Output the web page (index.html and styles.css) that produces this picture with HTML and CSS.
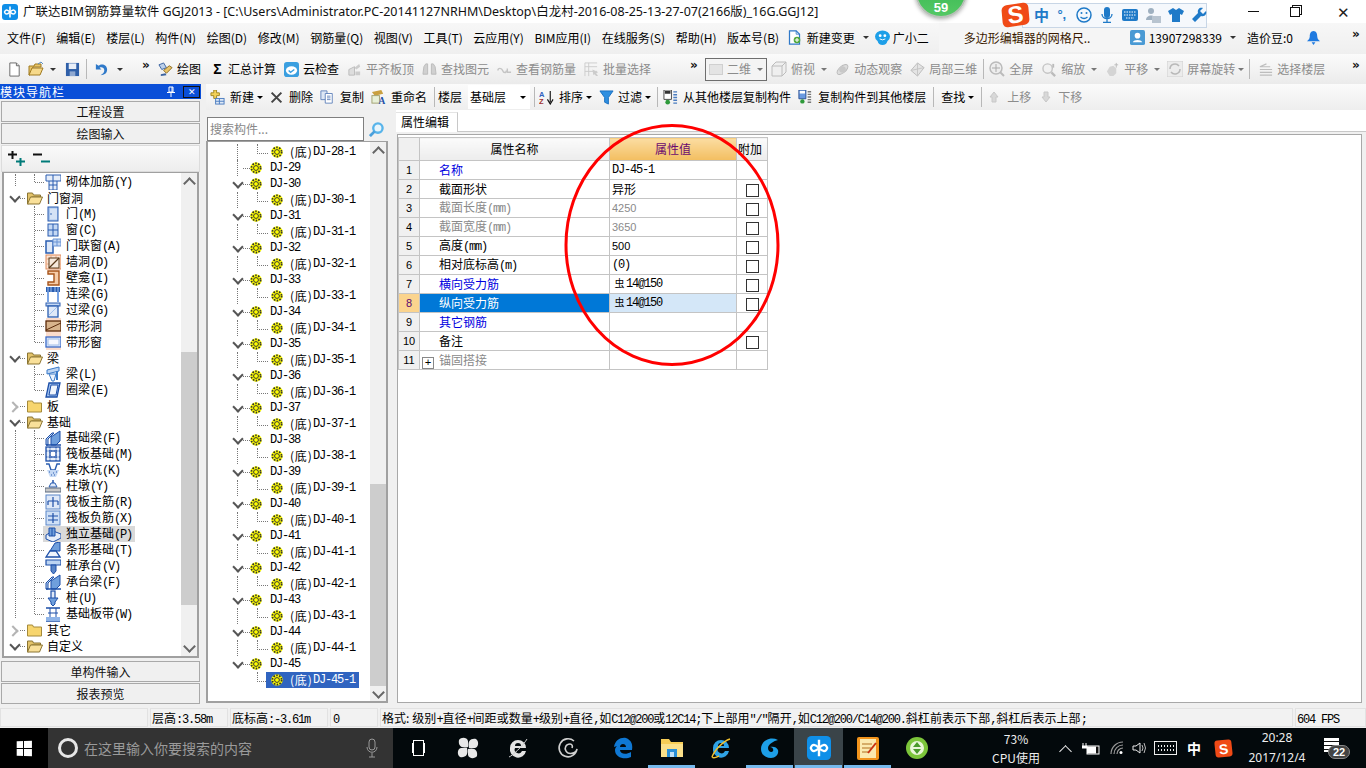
FILE: index.html
```html
<!DOCTYPE html>
<html lang="zh-CN">
<head>
<meta charset="utf-8">
<title>广联达BIM钢筋算量软件 GGJ2013</title>
<link rel="stylesheet" href="styles.css">
</head>
<body>
<svg class="defs" aria-hidden="true">
<symbol id="logo" viewBox="0 0 16 16"><rect width="16" height="16" rx="3" fill="#0f8fe8"/><path d="M8 2.500v11" stroke="#fff" stroke-width="1.600"/><path d="M2.500 8c1-3 3-2.500 5.500 0s4.500 3 5.500 0c-1-3-3-2.500-5.500 0s-4.500 3-5.500 0z" fill="#0f8fe8" stroke="#fff" stroke-width="1.500"/></symbol>
<symbol id="new" viewBox="0 0 16 16"><path d="M3 1h7l3 3v11H3z" fill="#fff" stroke="#666"/><path d="M10 1v3h3" fill="#ddd" stroke="#666"/></symbol>
<symbol id="open" viewBox="0 0 16 16"><path d="M1 5h5l1-2h6v3H5L2 14H1z" fill="#e8c66a" stroke="#a07a20"/><path d="M4 7h11l-3 7H1z" fill="#f6d98a" stroke="#a07a20"/><path d="M10 3l3-2 2 2" fill="none" stroke="#5a8fc0"/></symbol>
<symbol id="save" viewBox="0 0 16 16"><rect x="1" y="1" width="14" height="14" fill="#2f5fa8"/><rect x="4" y="1.500" width="8" height="6" fill="#e8eef8"/><rect x="5" y="10" width="6" height="5" fill="#8fa8d0"/></symbol>
<symbol id="undo" viewBox="0 0 16 16"><path d="M2 2v6h6L6 6c2-1 5 0 5 3 0 2-2 4-4 5 4 0 7-2 7-6 0-5-6-7-9-4z" fill="#2f79c9"/></symbol>
<symbol id="brush" viewBox="0 0 16 16"><path d="M1 3l5-2 3 5-5 2z" fill="#bcd0ea" stroke="#3a62a0"/><path d="M6 9l6-5 3 2-6 6z" fill="#e9c56a" stroke="#8a6a20"/><path d="M3 13l5-1 1 2-6 1z" fill="#3a62a0"/></symbol>
<symbol id="cloud" viewBox="0 0 16 16"><rect width="16" height="16" rx="3" fill="#3a9fe0"/><ellipse cx="8" cy="9" rx="6" ry="4.500" fill="#fff"/><path d="M5 9l2 2 4-3" fill="none" stroke="#3a9fe0" stroke-width="1.500"/></symbol>
<symbol id="grayblock" viewBox="0 0 16 16"><path d="M2 14V8l6-3v9z" fill="#ddd" stroke="#bbb"/><path d="M8 6l5-4 1 3-4 3zM9 10h5v4H9z" fill="#ccc"/></symbol>
<symbol id="binoc" viewBox="0 0 16 16"><path d="M2 5l2-3h2v11H1zM14 5l-2-3h-2v11h5z" fill="#d0d0d0" stroke="#bbb"/></symbol>
<symbol id="rebars" viewBox="0 0 16 16"><path d="M1 9c0-3 4-3 5 0s4 3 4 0" fill="none" stroke="#c4c4c4" stroke-width="1.500"/><path d="M11 7v4h4" fill="none" stroke="#c4c4c4" stroke-width="1.500"/></symbol>
<symbol id="batch" viewBox="0 0 16 16"><path d="M1 1h13M1 1v14M5 1v14M1 5h13M1 10h13" stroke="#ccc" fill="none"/><path d="M9 8l6 3-2 1 2 3-2 0-2-2-1 1z" fill="#ccc"/></symbol>
<symbol id="cube" viewBox="0 0 16 16"><path d="M1 5l4-4h10v10l-4 4H1z" fill="#efefef" stroke="#bcbcbc"/><path d="M1 5h10v10M11 5l4-4" fill="none" stroke="#bcbcbc"/></symbol>
<symbol id="orbit" viewBox="0 0 16 16"><ellipse cx="8" cy="8" rx="7" ry="3.500" transform="rotate(-40 8 8)" fill="#ddd" stroke="#bbb"/><circle cx="8" cy="8" r="3.500" fill="#c8c8c8"/></symbol>
<symbol id="local3d" viewBox="0 0 16 16"><path d="M8 1l7 5-7 9-7-6z" fill="#e4e4e4" stroke="#bbb"/><path d="M8 1v14M1 9l14-3" stroke="#c4c4c4"/></symbol>
<symbol id="zoomfull" viewBox="0 0 16 16"><circle cx="7" cy="7" r="6" fill="#eee" stroke="#bbb" stroke-width="1.500"/><path d="M7 3v8M3 7h8" stroke="#aaa"/><path d="M11 11l4 4" stroke="#bbb" stroke-width="2"/></symbol>
<symbol id="zoomin" viewBox="0 0 16 16"><circle cx="6" cy="7" r="5" fill="#f2f2f2" stroke="#c4c4c4" stroke-width="1.500"/><path d="M10 11l4 4" stroke="#bbb" stroke-width="2.500"/><path d="M12 2v4" stroke="#bbb" stroke-width="2"/></symbol>
<symbol id="hand" viewBox="0 0 16 16"><path d="M2 10l3-5 4-1 3 3v5l-3 3H5z" fill="#d4d4d4"/><path d="M12 1v5M10 3h4" stroke="#bbb"/></symbol>
<symbol id="rotate" viewBox="0 0 16 16"><rect width="16" height="16" fill="#ececec" stroke="#d0d0d0"/><path d="M3 8a5 5 0 0 1 9-3M13 8a5 5 0 0 1-9 3" fill="none" stroke="#b8b8b8" stroke-width="1.500"/></symbol>
<symbol id="floors" viewBox="0 0 16 16"><path d="M2 5h11M2 8h13M2 11h13M2 14h13M9 2L2 5" stroke="#bdbdbd" fill="none" stroke-width="1.200"/></symbol>
<symbol id="addcomp" viewBox="0 0 16 16"><path d="M4 0v3H1v3h3v3h3V6h3V3H7V0z" fill="#f4d258" stroke="#a08620"/><rect x="6" y="9" width="9" height="6" fill="#dfe9f6" stroke="#4a7cc0"/><path d="M6 12h9M10 9v6" stroke="#4a7cc0"/></symbol>
<symbol id="del" viewBox="0 0 16 16"><path d="M2 2l12 12M14 2L2 14" stroke="#444" stroke-width="2.500"/></symbol>
<symbol id="copy" viewBox="0 0 16 16"><path d="M1 1h7v10H1z" fill="#dde7f5" stroke="#5a7eb8"/><path d="M6 4h8v11H6z" fill="#fff" stroke="#5a7eb8"/><path d="M8 7h4M8 9h4M8 11h4" stroke="#5a7eb8"/></symbol>
<symbol id="rename" viewBox="0 0 16 16"><path d="M1 2l10-2 2 4-9 2z" fill="#c9a040"/><rect x="1" y="6" width="8" height="8" fill="#e8f0d8" stroke="#a0a070"/><text x="8" y="15" class="ictext">A</text></symbol>
<symbol id="sort" viewBox="0 0 16 16"><text x="0" y="7" class="ictext2">A</text><text x="0" y="15" class="ictext3">Z</text><path d="M12 1v12M9 10l3 5 3-5" fill="none" stroke="#111" stroke-width="1.200"/></symbol>
<symbol id="funnel" viewBox="0 0 16 16"><path d="M1 1h14L10 8v7l-4-2V8z" fill="#2f8fe0" stroke="#1a6fc0"/></symbol>
<symbol id="copyfrom" viewBox="0 0 16 16"><path d="M1 0h8v10H1z" fill="#fff" stroke="#444"/><rect x="2" y="1" width="6" height="3" fill="#333"/><circle cx="5" cy="13" r="2.500" fill="#2e9a3a"/><path d="M11 2h4M11 5h4M11 8h4M11 11h4M11 14h4" stroke="#4a7cc0" stroke-width="1.500"/></symbol>
<symbol id="copyto" viewBox="0 0 16 16"><path d="M1 0h8v10H1z" fill="#6a9ae0" stroke="#234a90"/><rect x="2" y="1" width="6" height="3" fill="#fff"/><circle cx="5" cy="13" r="2.500" fill="#2e9a3a"/><path d="M11 2h4M11 5h4M11 8h4M11 11h4M11 14h4" stroke="#777" stroke-width="1.500"/></symbol>
<symbol id="up" viewBox="0 0 10 12"><path d="M5 1l4 5H7v5H3V6H1z" fill="#d8d8d8" stroke="#c8c8c8"/></symbol>
<symbol id="down" viewBox="0 0 10 12"><path d="M5 11L1 6h2V1h4v5h2z" fill="#d8d8d8" stroke="#c8c8c8"/></symbol>
<symbol id="change" viewBox="0 0 16 18"><path d="M2 1h8l4 4v12H2z" fill="#fff" stroke="#2f79c9" stroke-width="1.500"/><path d="M10 1v4h4" fill="none" stroke="#2f79c9"/><circle cx="11" cy="12" r="4" fill="#52a93c"/><path d="M11 9.500v5M8.500 12h5" stroke="#fff" stroke-width="1.300"/></symbol>
<symbol id="robot" viewBox="0 0 16 16"><ellipse cx="8" cy="7" rx="8" ry="6.500" fill="#1d9fe8"/><ellipse cx="8" cy="12" rx="5" ry="4" fill="#1d9fe8"/><circle cx="5.500" cy="6" r="1.500" fill="#fff"/><circle cx="10.500" cy="6" r="1.500" fill="#fff"/><path d="M5 9.500q3 2 6 0" stroke="#fff" fill="none"/></symbol>
<symbol id="userblue" viewBox="0 0 16 16"><rect width="16" height="16" rx="2" fill="#4a9ad4"/><circle cx="8" cy="6" r="3" fill="#fff"/><path d="M3 13c1-3 9-3 10 0z" fill="#fff"/></symbol>
<symbol id="bell" viewBox="0 0 16 16"><path d="M8 1c3 0 4 3 4 6 0 3 2 4 3 5H1c1-1 3-2 3-5 0-3 1-6 4-6z" fill="#1f7ae0"/><path d="M6 13h4l-2 3z" fill="#1f7ae0"/></symbol>
<symbol id="gear" viewBox="0 0 12 12"><circle cx="6" cy="6" r="5.800" fill="#ff0"/><circle cx="6" cy="6" r="4.600" fill="none" stroke="#333" stroke-width="1.800" stroke-dasharray="1.600 1.300"/><circle cx="6" cy="6" r="2.400" fill="#ff0" stroke="#333"/></symbol>
<symbol id="lens" viewBox="0 0 16 16"><circle cx="9.500" cy="6.500" r="5" fill="#e8f5fc" stroke="#58b4ea" stroke-width="2.500"/><path d="M6 10l-5 5" stroke="#4aa0dc" stroke-width="3"/></symbol>
<symbol id="pin" viewBox="0 0 10 12"><path d="M3 1h4v5H3z" fill="none" stroke="#fff"/><path d="M1 6.500h8M5 7v4" stroke="#fff"/><path d="M6 1v5" stroke="#fff"/></symbol>
<symbol id="expandall" viewBox="0 0 18 16"><path d="M0 3.500h9M4.500 0v8" stroke="#111" stroke-width="2"/><path d="M8 10.500h9M12.500 7v8" stroke="#007a78" stroke-width="2"/></symbol>
<symbol id="collapseall" viewBox="0 0 18 16"><path d="M0 3.500h9" stroke="#111" stroke-width="2"/><path d="M8 10.500h9" stroke="#007a78" stroke-width="2"/></symbol>
<symbol id="folder" viewBox="0 0 16 14"><path d="M1 2h5l1 2h8v9H1z" fill="#f7d56e" stroke="#a58a3a"/></symbol>
<symbol id="folderopen" viewBox="0 0 16 14"><path d="M1 2h5l1 2h7v2H5l-3 7H1z" fill="#e3c36a" stroke="#8a7432"/><path d="M4 6h12l-3 7H1z" fill="#f9e09a" stroke="#8a7432"/></symbol>
<symbol id="n-masonry" viewBox="0 0 16 16"><path d="M1 1h15v6h-4v9H4V7H1z" fill="#e5edf9" stroke="#2a5db0"/><path d="M4 7h8M8 1v15M4 11h8" stroke="#2a5db0"/></symbol>
<symbol id="n-door" viewBox="0 0 16 16"><rect x="3" y="1" width="10" height="14" fill="#a8c4ec" stroke="#2a5db0"/><rect x="5" y="2.500" width="7" height="11" fill="#d4e2f6"/><circle cx="6" cy="8" r=".8" fill="#2a5db0"/></symbol>
<symbol id="n-window" viewBox="0 0 16 16"><rect x="3" y="2" width="10" height="12" fill="#c4d8f4" stroke="#2a5db0"/><path d="M8 2v12M3 8h10" stroke="#2a5db0"/></symbol>
<symbol id="n-doorwin" viewBox="0 0 16 16"><rect x="1" y="3" width="7" height="12" fill="#dfe9f8" stroke="#2a5db0" stroke-width="1.500"/><path d="M8 1h8v7H8z" fill="#c4d8f4" stroke="#6a94d4"/><path d="M12 1v7M8 4h8" stroke="#6a94d4"/></symbol>
<symbol id="n-hole" viewBox="0 0 16 16"><rect x="1" y="1" width="15" height="14" fill="#fbe4d4" stroke="#e08a5a"/><path d="M1 5h15M6 1v14M11 1v14M1 10h15" stroke="#ecae88"/><rect x="4" y="4" width="10" height="10" fill="#f6e9dc" stroke="#5a3a1a"/><path d="M4 14L14 4" stroke="#5a3a1a" stroke-width="1.300"/></symbol>
<symbol id="n-niche" viewBox="0 0 16 16"><path d="M3 1h11v14H3v-3h6V4H3z" fill="#f6cca8" stroke="#a8541a" stroke-width="1.400"/></symbol>
<symbol id="n-lintel" viewBox="0 0 16 16"><rect x="1" y="1" width="14" height="5" fill="#2a5db0"/><path d="M3 1v5M6 1v5M10 1v5M13 1v5" stroke="#9fc0ee"/><path d="M3 6v10M13 6v10" stroke="#7aa4e4" stroke-width="2"/></symbol>
<symbol id="n-over" viewBox="0 0 16 16"><rect x="1" y="1" width="14" height="3" fill="#c4d8f4" stroke="#2a5db0"/><rect x="3" y="4" width="10" height="11" fill="#dfe9f8" stroke="#2a5db0" stroke-width="1.300"/><path d="M4 13L12 5" stroke="#9fc0ee"/></symbol>
<symbol id="n-bandh" viewBox="0 0 16 16"><rect x="1" y="0" width="15" height="16" fill="#fbdccc"/><rect x="1" y="3" width="15" height="10" fill="#d9b48c" stroke="#5a2a0a" stroke-width="1.300"/><path d="M1 12L16 5" stroke="#5a2a0a"/></symbol>
<symbol id="n-bandw" viewBox="0 0 16 16"><rect x="1" y="0" width="15" height="16" fill="#fbdccc"/><rect x="1" y="3" width="15" height="10" fill="#e5ecfa" stroke="#3a6ac8" stroke-width="1.300"/><rect x="3" y="5" width="11" height="6" fill="#f6f8fe" stroke="#a0bce8"/></symbol>
<symbol id="n-beam" viewBox="0 0 16 16"><path d="M2 4l12-3v4l-12 3z" fill="#bcd4f2" stroke="#3a7ac8"/><path d="M4 8h7l-2 7H7z" fill="#eaf2fc" stroke="#3a7ac8"/><path d="M12 5v9" stroke="#3a7ac8" stroke-width="2"/></symbol>
<symbol id="n-ring" viewBox="0 0 16 16"><path d="M4 1h11l-3 14H1z" fill="#9fc0ee" stroke="#1d4fa8" stroke-width="1.300"/><path d="M6 3h7l-2 10H4z" fill="#f0f5fd" stroke="#1d4fa8"/></symbol>
<symbol id="n-fb" viewBox="0 0 16 16"><path d="M1 15V9l6-6h2L3 9v6z" fill="#bcd4f2" stroke="#1d4fa8"/><path d="M6 15V7l9-6v10l-4 4z" fill="#6f9fdc" stroke="#1d4fa8"/><path d="M1 15h15" stroke="#1d4fa8" stroke-width="1.500"/></symbol>
<symbol id="n-raft" viewBox="0 0 16 16"><rect x="1" y="1" width="14" height="14" fill="#e5edf9" stroke="#1d4fa8" stroke-width="1.300"/><rect x="5" y="5" width="6" height="6" fill="#fff" stroke="#1d4fa8"/><path d="M1 5h14M1 11h14M5 1v14M11 1v14" stroke="#1d4fa8" stroke-dasharray="1.500 1"/></symbol>
<symbol id="n-pit" viewBox="0 0 16 16"><path d="M1 2h3l2 6h4l2-6h3" fill="none" stroke="#2a5db0" stroke-width="1.400"/><path d="M2 8h12l-3 7H5z" fill="#c4d8f4"/><path d="M4 10h1M8 11h1M11 10h1M6 13h1M9 13h1" stroke="#2a5db0"/></symbol>
<symbol id="n-pier" viewBox="0 0 16 16"><path d="M7 2h2v3H7z" fill="#5a80c0"/><path d="M4 9l2-4h4l2 4z" fill="#dfe9f8" stroke="#2a5db0"/><rect x="0" y="10" width="16" height="4" fill="#c8c8c8" stroke="#5a6a80"/></symbol>
<symbol id="n-mainbar" viewBox="0 0 16 16"><rect x="1" y="1" width="14" height="14" fill="#dfe9f8" stroke="#5a86c8"/><path d="M8 3v10M3 7h10M3 7v4M13 7v4" fill="none" stroke="#1d4fa8" stroke-width="1.200"/></symbol>
<symbol id="n-negbar" viewBox="0 0 16 16"><rect x="1" y="1" width="14" height="14" fill="#cfe0f6" stroke="#5a86c8"/><path d="M8 3v10M3 6h10M3 10h10" fill="none" stroke="#1d4fa8" stroke-width="1.200"/></symbol>
<symbol id="n-ind" viewBox="0 0 16 16"><path d="M1 9l7-4 8 3v4l-8 4-7-3z" fill="#e5edf9" stroke="#1d4fa8"/><path d="M4 2h6v8H4z" fill="#6f9fdc" stroke="#1d4fa8"/><path d="M7 2v8" stroke="#1d4fa8"/></symbol>
<symbol id="n-strip" viewBox="0 0 16 16"><path d="M5 9l5-8 5-1v9z" fill="#6f9fdc" stroke="#1d4fa8"/><path d="M1 15l4-6h6l4 6z" fill="#f0f5fd" stroke="#1d4fa8" stroke-width="1.300"/></symbol>
<symbol id="n-cap" viewBox="0 0 16 16"><path d="M1 2h15v5H1z" fill="#bcd4f2" stroke="#1d4fa8" stroke-width="1.200"/><path d="M6 7h5v6l-2.500 3L6 13z" fill="#5a86c8" stroke="#1d4fa8"/></symbol>
<symbol id="n-pile" viewBox="0 0 16 16"><rect x="6" y="1" width="4" height="8" fill="#dfe9f8" stroke="#1d4fa8" stroke-width="1.200"/><path d="M3 8h10l-3 4v2l-2 2-2-2v-2z" fill="#6f9fdc" stroke="#1d4fa8"/></symbol>
<symbol id="n-band" viewBox="0 0 16 16"><path d="M1 2h14M1 15h14" stroke="#1d4fa8" stroke-width="1.500"/><rect x="1" y="11" width="14" height="4" fill="#8fb4e8"/><path d="M5 2v9M11 2v9M3 7h10" stroke="#1d4fa8"/></symbol>
<symbol id="w-fan" viewBox="0 0 24 24"><path d="M12 11C5 13 2 9 3 4c2-3 8-3 9 1zM13 12c-2-7 2-10 7-9 3 2 3 8-1 9zM12 13c7-2 10 2 9 7-2 3-8 3-9-1zM11 12c2 7-2 10-7 9-3-2-3-8 1-9z" fill="#e8e8e8"/></symbol>
<symbol id="w-iewhite" viewBox="0 0 24 24"><path d="M4 12a8 8 0 0 1 16 0H9a3.500 3.500 0 0 0 7 3h4a8 8 0 0 1-16-3zm5-2h6a3 3 0 0 0-6 0z" fill="#e4e4e4" fill-rule="evenodd"/><path d="M3 21c3-1 14-11 18-18" stroke="#ccc" fill="none"/></symbol>
<symbol id="w-swirl" viewBox="0 0 24 24"><path d="M18 5a9 9 0 1 0 3 8c-1 5-9 6-11 2-2-3 0-7 4-7 2 0 3 2 2 4" fill="none" stroke="#d0d0d0" stroke-width="1.600"/></symbol>
<symbol id="w-edge" viewBox="0 0 24 24"><path d="M3 11C4 4 10 1 15 2c5 2 7 6 6 12H9c0 4 6 5 11 2v5c-6 3-16 1-16-7 0-2 1-3 2-4-1 0-2 1-3 1zm6 0h6c0-4-6-4-6 0z" fill="#0f78d4" fill-rule="evenodd"/></symbol>
<symbol id="w-folder" viewBox="0 0 24 24"><path d="M1 3h8l2 3h12v15H1z" fill="#f7cd56"/><rect x="1" y="8" width="22" height="13" fill="#fbe08a"/><rect x="7" y="13" width="10" height="8" fill="#2a8fd8"/><rect x="10" y="16" width="4" height="5" fill="#bfe0f8"/></symbol>
<symbol id="w-ie" viewBox="0 0 24 24"><path d="M4 12a8 8 0 0 1 16 0H9a3.500 3.500 0 0 0 7 3h4a8 8 0 0 1-16-3zm5-2h6a3 3 0 0 0-6 0z" fill="#2fa3e6" fill-rule="evenodd"/><path d="M3 21C5 15 14 5 21 3M3 21c2 2 5 0 7-1" stroke="#f2c230" fill="none" stroke-width="1.500"/></symbol>
<symbol id="w-g" viewBox="0 0 24 24"><path d="M20 4C12 0 3 5 3 13c0 6 5 9 10 9 5 0 8-4 7-8-1-3-5-4-8-3 2 0 4 2 3 4-1 2-5 1-5-3 0-4 6-7 10-8z" fill="#1d9fe8"/></symbol>
<symbol id="w-note" viewBox="0 0 24 24"><rect x="1" y="1" width="22" height="23" rx="2" fill="#f2941c"/><rect x="4" y="3" width="16" height="19" fill="#fbeab0"/><path d="M6 8h10M6 12h9M6 16h6" stroke="#b07020"/><path d="M20 7l-8 10" stroke="#c83010" stroke-width="2"/></symbol>
<symbol id="w-green" viewBox="0 0 24 24"><circle cx="12" cy="12" r="11" fill="#7cc53a"/><circle cx="12" cy="12" r="7" fill="#eaf6d8"/><path d="M12 6l4 5H8zM12 18l4-5H8z" fill="#4a9a2a"/></symbol>
<symbol id="w-usb" viewBox="0 0 18 14"><path d="M1 2v3M4 2v3M0 5h5v2H0z" stroke="#fff" fill="#fff"/><rect x="5" y="5" width="12" height="8" fill="#111" stroke="#fff"/><rect x="5" y="5.500" width="9" height="7" fill="#fff"/></symbol>
<symbol id="w-wifi" viewBox="0 0 14 14"><path d="M1 13a12 12 0 0 1 12-12M4 13a9 9 0 0 1 9-9M7 13a6 6 0 0 1 6-6" fill="none" stroke="#999" stroke-width="1.200"/><circle cx="11" cy="11.500" r="1.500" fill="#fff"/></symbol>
<symbol id="w-vol" viewBox="0 0 16 14"><path d="M1 5h3l4-3v10L4 9H1z" fill="none" stroke="#eee"/><path d="M10 4q2 3 0 6M12 2q3 5 0 10" fill="none" stroke="#bbb"/></symbol>
</svg>

<header class="titlebar">
  <svg class="title-logo"><use href="#logo"/></svg>
  <span class="title-text">广联达BIM钢筋算量软件 GGJ2013 - [C:\Users\Administrator.PC-20141127NRHM\Desktop\白龙村-2016-08-25-13-27-07(2166版)_16G.GGJ12]</span>
  <div class="winctl">
    <i class="win-min"></i>
    <i class="win-res"></i>
    <i class="win-close">✕</i>
  </div>
</header>

<nav class="menubar">
  <span>文件(F)</span><span>编辑(E)</span><span>楼层(L)</span><span>构件(N)</span><span>绘图(D)</span><span>修改(M)</span><span>钢筋量(Q)</span><span>视图(V)</span><span>工具(T)</span><span>云应用(Y)</span><span>BIM应用(I)</span><span>在线服务(S)</span><span>帮助(H)</span><span>版本号(B)</span>
  <svg class="ic m-change"><use href="#change"/></svg><span class="m-tight">新建变更</span><i class="dd m-dd"></i>
  <svg class="ic m-robot"><use href="#robot"/></svg><span class="m-tight">广小二</span>
  <div class="m-notice">多边形编辑器的网格尺..</div>
  <svg class="ic m-user"><use href="#userblue"/></svg><span class="m-tight">13907298339</span><i class="dd m-dd"></i>
  <span class="m-bean">造价豆:0</span>
  <svg class="ic m-bell"><use href="#bell"/></svg>
  <b class="more more-end">»</b>
</nav>

<div class="toolbar">
  <svg class="ic g7"><use href="#new"/></svg>
  <svg class="ic16 g6"><use href="#open"/></svg><i class="dd g6"></i>
  <svg class="ic g9"><use href="#save"/></svg><i class="sep g6"></i>
  <svg class="ic g7"><use href="#undo"/></svg><i class="dd g8"></i>
  <b class="more g20">»</b>
  <div class="tool g7"><svg class="ic"><use href="#brush"/></svg><span>绘图</span></div>
  <div class="tool g10"><span class="sigma">Σ</span><span>汇总计算</span></div>
  <div class="tool g8"><svg class="ic"><use href="#cloud"/></svg><span>云检查</span></div>
  <div class="tool off g8"><svg class="ic"><use href="#grayblock"/></svg><span>平齐板顶</span></div>
  <div class="tool off g8"><svg class="ic"><use href="#binoc"/></svg><span>查找图元</span></div>
  <div class="tool off g8"><svg class="ic"><use href="#rebars"/></svg><span>查看钢筋量</span></div>
  <div class="tool off g8"><svg class="ic"><use href="#batch"/></svg><span>批量选择</span></div>
  <b class="more g39">»</b>
  <div class="combo combo2d g6"><i class="combo-swatch"></i><span>二维</span><i class="dd dd-grey"></i></div>
  <div class="tool off g4"><svg class="ic16"><use href="#cube"/></svg><span>俯视</span></div><i class="dd dd-grey g6"></i>
  <div class="tool off g8"><svg class="ic"><use href="#orbit"/></svg><span>动态观察</span></div>
  <div class="tool off g8"><svg class="ic"><use href="#local3d"/></svg><span>局部三维</span></div>
  <i class="sep g6"></i>
  <div class="tool off g5"><svg class="ic16"><use href="#zoomfull"/></svg><span>全屏</span></div>
  <div class="tool off g9"><svg class="ic"><use href="#zoomin"/></svg><span>缩放</span></div><i class="dd dd-grey g6"></i>
  <div class="tool off g8"><svg class="ic"><use href="#hand"/></svg><span>平移</span></div><i class="dd dd-grey g6"></i>
  <div class="tool off g7"><svg class="ic16"><use href="#rotate"/></svg><span>屏幕旋转</span></div><i class="dd dd-grey g3"></i>
  <i class="sep g5"></i>
  <div class="tool off g8"><svg class="ic"><use href="#floors"/></svg><span>选择楼层</span></div>
  <b class="more more-end">»</b>
</div>

<main class="workspace">
  <aside class="nav">
    <div class="nav-head"><span>模块导航栏</span><svg class="pin"><use href="#pin"/></svg><i class="nav-x">✕</i></div>
    <button class="nav-btn">工程设置</button>
    <button class="nav-btn">绘图输入</button>
    <div class="nav-tools"><svg class="pm"><use href="#expandall"/></svg><svg class="pm"><use href="#collapseall"/></svg></div>
    <div class="treebox nav-tree">
      <div class="tree-list">
        <div class="grp trunk"><div class="nc"><div class="ni"><svg class="nic"><use href="#n-masonry"/></svg><span>砌体加筋<span class="m">(Y)</span></span></div></div></div>
        <div class="nf"><i class="chev"></i><svg class="fol"><use href="#folderopen"/></svg><span>门窗洞</span></div>
        <div class="grp">
          <div class="nc"><div class="ni"><svg class="nic"><use href="#n-door"/></svg><span>门<span class="m">(M)</span></span></div></div>
          <div class="nc"><div class="ni"><svg class="nic"><use href="#n-window"/></svg><span>窗<span class="m">(C)</span></span></div></div>
          <div class="nc"><div class="ni"><svg class="nic"><use href="#n-doorwin"/></svg><span>门联窗<span class="m">(A)</span></span></div></div>
          <div class="nc"><div class="ni"><svg class="nic"><use href="#n-hole"/></svg><span>墙洞<span class="m">(D)</span></span></div></div>
          <div class="nc"><div class="ni"><svg class="nic"><use href="#n-niche"/></svg><span>壁龛<span class="m">(I)</span></span></div></div>
          <div class="nc"><div class="ni"><svg class="nic"><use href="#n-lintel"/></svg><span>连梁<span class="m">(G)</span></span></div></div>
          <div class="nc"><div class="ni"><svg class="nic"><use href="#n-over"/></svg><span>过梁<span class="m">(G)</span></span></div></div>
          <div class="nc"><div class="ni"><svg class="nic"><use href="#n-bandh"/></svg><span>带形洞</span></div></div>
          <div class="nc"><div class="ni"><svg class="nic"><use href="#n-bandw"/></svg><span>带形窗</span></div></div>
        </div>
        <div class="nf"><i class="chev"></i><svg class="fol"><use href="#folderopen"/></svg><span>梁</span></div>
        <div class="grp">
          <div class="nc"><div class="ni"><svg class="nic"><use href="#n-beam"/></svg><span>梁<span class="m">(L)</span></span></div></div>
          <div class="nc"><div class="ni"><svg class="nic"><use href="#n-ring"/></svg><span>圈梁<span class="m">(E)</span></span></div></div>
        </div>
        <div class="nf"><i class="chev closed"></i><svg class="fol"><use href="#folder"/></svg><span>板</span></div>
        <div class="nf"><i class="chev"></i><svg class="fol"><use href="#folderopen"/></svg><span>基础</span></div>
        <div class="grp trunk">
          <div class="nc"><div class="ni"><svg class="nic"><use href="#n-fb"/></svg><span>基础梁<span class="m">(F)</span></span></div></div>
          <div class="nc"><div class="ni"><svg class="nic"><use href="#n-raft"/></svg><span>筏板基础<span class="m">(M)</span></span></div></div>
          <div class="nc"><div class="ni"><svg class="nic"><use href="#n-pit"/></svg><span>集水坑<span class="m">(K)</span></span></div></div>
          <div class="nc"><div class="ni"><svg class="nic"><use href="#n-pier"/></svg><span>柱墩<span class="m">(Y)</span></span></div></div>
          <div class="nc"><div class="ni"><svg class="nic"><use href="#n-mainbar"/></svg><span>筏板主筋<span class="m">(R)</span></span></div></div>
          <div class="nc"><div class="ni"><svg class="nic"><use href="#n-negbar"/></svg><span>筏板负筋<span class="m">(X)</span></span></div></div>
          <div class="nc"><div class="ni ni-sel"><svg class="nic"><use href="#n-ind"/></svg><span>独立基础<span class="m">(P)</span></span></div></div>
          <div class="nc"><div class="ni"><svg class="nic"><use href="#n-strip"/></svg><span>条形基础<span class="m">(T)</span></span></div></div>
          <div class="nc"><div class="ni"><svg class="nic"><use href="#n-cap"/></svg><span>桩承台<span class="m">(V)</span></span></div></div>
          <div class="nc"><div class="ni"><svg class="nic"><use href="#n-fb"/></svg><span>承台梁<span class="m">(F)</span></span></div></div>
          <div class="nc"><div class="ni"><svg class="nic"><use href="#n-pile"/></svg><span>桩<span class="m">(U)</span></span></div></div>
          <div class="nc"><div class="ni"><svg class="nic"><use href="#n-band"/></svg><span>基础板带<span class="m">(W)</span></span></div></div>
        </div>
        <div class="nf"><i class="chev closed"></i><svg class="fol"><use href="#folder"/></svg><span>其它</span></div>
        <div class="nf"><i class="chev"></i><svg class="fol"><use href="#folderopen"/></svg><span>自定义</span></div>
      </div>
      <div class="sb"><i class="sb-up"></i><div class="sb-track"><div class="thumb thumb-nav"></div></div><i class="sb-dn"></i></div>
    </div>
    <button class="nav-btn nav-btn-low">单构件输入</button>
    <button class="nav-btn">报表预览</button>
  </aside>

  <div class="editor">
    <div class="toolbar2">
      <div class="tool t5"><svg class="ic"><use href="#addcomp"/></svg><span>新建</span></div><i class="dd dd-k g3"></i>
      <div class="tool t6 g7"><svg class="ic13"><use href="#del"/></svg><span>删除</span></div>
      <div class="tool t6 g7"><svg class="ic14"><use href="#copy"/></svg><span>复制</span></div>
      <div class="tool t5 g7"><svg class="ic"><use href="#rename"/></svg><span>重命名</span></div>
      <i class="sep g7"></i>
      <span class="g3">楼层</span>
      <div class="combo-floor g6"><span>基础层</span><i class="dd dd-k"></i></div>
      <i class="sep g4"></i>
      <div class="tool t5 g4"><svg class="ic"><use href="#sort"/></svg><span>排序</span></div><i class="dd dd-k g3"></i>
      <div class="tool g7"><svg class="ic"><use href="#funnel"/></svg><span>过滤</span></div><i class="dd dd-k g3"></i>
      <i class="sep g6"></i>
      <div class="tool t5 g5"><svg class="ic"><use href="#copyfrom"/></svg><span>从其他楼层复制构件</span></div>
      <div class="tool t6 g7"><svg class="ic14"><use href="#copyto"/></svg><span>复制构件到其他楼层</span></div>
      <i class="sep g7"></i>
      <span class="g7">查找</span><i class="dd dd-k g3"></i>
      <i class="sep g7"></i>
      <div class="tool off t8 g7"><svg class="ic10"><use href="#up"/></svg><span>上移</span></div>
      <div class="tool off t7 g10"><svg class="ic10"><use href="#down"/></svg><span>下移</span></div>
    </div>
    <div class="panes">
      <section class="comp">
        <div class="search"><div class="search-input">搜索构件...</div><svg class="search-btn"><use href="#lens"/></svg></div>
        <div class="treebox comp-tree">
          <div class="tree-list dj-list">
            <div class="l1"><div class="leaf"><svg class="gear"><use href="#gear"/></svg><span class="bot">(底)</span><span class="m">DJ-28-1</span></div></div>
            <div class="l0 plain"><i class="slot"></i><svg class="gear"><use href="#gear"/></svg><span class="m">DJ-29</span></div>
            <div class="l0"><i class="chev"></i><svg class="gear"><use href="#gear"/></svg><span class="m">DJ-30</span></div>
            <div class="l1"><div class="leaf"><svg class="gear"><use href="#gear"/></svg><span class="bot">(底)</span><span class="m">DJ-30-1</span></div></div>
            <div class="l0"><i class="chev"></i><svg class="gear"><use href="#gear"/></svg><span class="m">DJ-31</span></div>
            <div class="l1"><div class="leaf"><svg class="gear"><use href="#gear"/></svg><span class="bot">(底)</span><span class="m">DJ-31-1</span></div></div>
            <div class="l0"><i class="chev"></i><svg class="gear"><use href="#gear"/></svg><span class="m">DJ-32</span></div>
            <div class="l1"><div class="leaf"><svg class="gear"><use href="#gear"/></svg><span class="bot">(底)</span><span class="m">DJ-32-1</span></div></div>
            <div class="l0"><i class="chev"></i><svg class="gear"><use href="#gear"/></svg><span class="m">DJ-33</span></div>
            <div class="l1"><div class="leaf"><svg class="gear"><use href="#gear"/></svg><span class="bot">(底)</span><span class="m">DJ-33-1</span></div></div>
            <div class="l0"><i class="chev"></i><svg class="gear"><use href="#gear"/></svg><span class="m">DJ-34</span></div>
            <div class="l1"><div class="leaf"><svg class="gear"><use href="#gear"/></svg><span class="bot">(底)</span><span class="m">DJ-34-1</span></div></div>
            <div class="l0"><i class="chev"></i><svg class="gear"><use href="#gear"/></svg><span class="m">DJ-35</span></div>
            <div class="l1"><div class="leaf"><svg class="gear"><use href="#gear"/></svg><span class="bot">(底)</span><span class="m">DJ-35-1</span></div></div>
            <div class="l0"><i class="chev"></i><svg class="gear"><use href="#gear"/></svg><span class="m">DJ-36</span></div>
            <div class="l1"><div class="leaf"><svg class="gear"><use href="#gear"/></svg><span class="bot">(底)</span><span class="m">DJ-36-1</span></div></div>
            <div class="l0"><i class="chev"></i><svg class="gear"><use href="#gear"/></svg><span class="m">DJ-37</span></div>
            <div class="l1"><div class="leaf"><svg class="gear"><use href="#gear"/></svg><span class="bot">(底)</span><span class="m">DJ-37-1</span></div></div>
            <div class="l0"><i class="chev"></i><svg class="gear"><use href="#gear"/></svg><span class="m">DJ-38</span></div>
            <div class="l1"><div class="leaf"><svg class="gear"><use href="#gear"/></svg><span class="bot">(底)</span><span class="m">DJ-38-1</span></div></div>
            <div class="l0"><i class="chev"></i><svg class="gear"><use href="#gear"/></svg><span class="m">DJ-39</span></div>
            <div class="l1"><div class="leaf"><svg class="gear"><use href="#gear"/></svg><span class="bot">(底)</span><span class="m">DJ-39-1</span></div></div>
            <div class="l0"><i class="chev"></i><svg class="gear"><use href="#gear"/></svg><span class="m">DJ-40</span></div>
            <div class="l1"><div class="leaf"><svg class="gear"><use href="#gear"/></svg><span class="bot">(底)</span><span class="m">DJ-40-1</span></div></div>
            <div class="l0"><i class="chev"></i><svg class="gear"><use href="#gear"/></svg><span class="m">DJ-41</span></div>
            <div class="l1"><div class="leaf"><svg class="gear"><use href="#gear"/></svg><span class="bot">(底)</span><span class="m">DJ-41-1</span></div></div>
            <div class="l0"><i class="chev"></i><svg class="gear"><use href="#gear"/></svg><span class="m">DJ-42</span></div>
            <div class="l1"><div class="leaf"><svg class="gear"><use href="#gear"/></svg><span class="bot">(底)</span><span class="m">DJ-42-1</span></div></div>
            <div class="l0"><i class="chev"></i><svg class="gear"><use href="#gear"/></svg><span class="m">DJ-43</span></div>
            <div class="l1"><div class="leaf"><svg class="gear"><use href="#gear"/></svg><span class="bot">(底)</span><span class="m">DJ-43-1</span></div></div>
            <div class="l0"><i class="chev"></i><svg class="gear"><use href="#gear"/></svg><span class="m">DJ-44</span></div>
            <div class="l1"><div class="leaf"><svg class="gear"><use href="#gear"/></svg><span class="bot">(底)</span><span class="m">DJ-44-1</span></div></div>
            <div class="l0"><i class="chev"></i><svg class="gear"><use href="#gear"/></svg><span class="m">DJ-45</span></div>
            <div class="l1 last"><div class="leaf leaf-sel"><svg class="gear"><use href="#gear"/></svg><span class="bot">(底)</span><span class="m">DJ-45-1</span></div></div>
          </div>
          <div class="sb"><i class="sb-up"></i><div class="sb-track"><div class="thumb thumb-comp"></div></div><i class="sb-dn"></i></div>
        </div>
      </section>
      <section class="props">
        <div class="tabstrip"><div class="tab">属性编辑</div></div>
        <div class="propbox">
          <table class="grid">
            <colgroup><col class="c-n"><col class="c-name"><col class="c-val"><col class="c-add"></colgroup>
            <thead><tr><th class="rn"></th><th>属性名称</th><th class="hval">属性值</th><th class="hadd">附加</th></tr></thead>
            <tbody>
              <tr><td class="rn">1</td><td class="lb blue">名称</td><td class="val m">DJ-45-1</td><td></td></tr>
              <tr><td class="rn">2</td><td class="lb">截面形状</td><td class="val">异形</td><td class="ck"><i></i></td></tr>
              <tr class="dis"><td class="rn">3</td><td class="lb">截面长度<span class="m">(mm)</span></td><td class="val ln">4250</td><td class="ck"><i></i></td></tr>
              <tr class="dis"><td class="rn">4</td><td class="lb">截面宽度<span class="m">(mm)</span></td><td class="val ln">3650</td><td class="ck"><i></i></td></tr>
              <tr><td class="rn">5</td><td class="lb">高度<span class="m">(mm)</span></td><td class="val ln">500</td><td class="ck"><i></i></td></tr>
              <tr><td class="rn">6</td><td class="lb">相对底标高<span class="m">(m)</span></td><td class="val m">(0)</td><td class="ck"><i></i></td></tr>
              <tr><td class="rn">7</td><td class="lb blue">横向受力筋</td><td class="val m"><span class="rebar">虫</span>14@150</td><td class="ck"><i></i></td></tr>
              <tr class="sel"><td class="rn">8</td><td class="lb">纵向受力筋</td><td class="val m"><span class="rebar">虫</span>14@150</td><td class="ck"><i></i></td></tr>
              <tr><td class="rn">9</td><td class="lb blue">其它钢筋</td><td class="val"></td><td></td></tr>
              <tr><td class="rn">10</td><td class="lb">备注</td><td class="val"></td><td class="ck"><i></i></td></tr>
              <tr class="dis"><td class="rn">11</td><td class="lb lb-exp"><i class="expand">+</i>锚固搭接</td><td class="val"></td><td></td></tr>
            </tbody>
          </table>
        </div>
      </section>
    </div>
  </div>
</main>

<footer class="status">
  <div class="st st-a"></div>
  <div class="st st-b">层高<span class="m">:3.58m</span></div>
  <div class="st st-c">底标高<span class="m">:-3.61m</span></div>
  <div class="st st-d"><span class="m">0</span></div>
  <div class="st st-e">格式: 级别<span class="m">+</span>直径<span class="m">+</span>间距或数量<span class="m">+</span>级别<span class="m">+</span>直径<span class="m">,</span>如<span class="m">C12@200</span>或<span class="m">12C14;</span>下上部用<span class="m">"/"</span>隔开<span class="m">,</span>如<span class="m">C12@200/C14@200.</span>斜杠前表示下部<span class="m">,</span>斜杠后表示上部<span class="m">;</span></div>
  <div class="st st-f"><span class="m">604 FPS</span></div>
</footer>

<div class="taskbar">
  <div class="start"><i class="wlogo"><b></b><b></b><b></b><b></b></i></div>
  <div class="cortana"><i class="ring"></i><span>在这里输入你要搜索的内容</span>
    <svg class="mic" viewBox="0 0 12 20"><rect x="3" y="1" width="6" height="11" rx="3" fill="none" stroke="#999"/><path d="M1 9c0 7 10 7 10 0M6 15v4M3 19h6" fill="none" stroke="#999"/></svg>
  </div>
  <div class="task t50"><i class="taskview"></i></div>
  <div class="task t50"><svg class="tk"><use href="#w-fan"/></svg></div>
  <div class="task t50"><svg class="tk"><use href="#w-iewhite"/></svg></div>
  <div class="task t50"><svg class="tk"><use href="#w-swirl"/></svg></div>
  <div class="task run first-pin"><svg class="tk"><use href="#w-edge"/></svg></div>
  <div class="task run"><svg class="tk"><use href="#w-folder"/></svg></div>
  <div class="task"><svg class="tk"><use href="#w-ie"/></svg></div>
  <div class="task run"><svg class="tk"><use href="#w-g"/></svg></div>
  <div class="task run active"><svg class="tk"><use href="#logo"/></svg></div>
  <div class="task run"><svg class="tk"><use href="#w-note"/></svg></div>
  <div class="task"><svg class="tk"><use href="#w-green"/></svg></div>
  <div class="cpu"><span>73%</span><span>CPU使用</span></div>
  <i class="tray-up"></i>
  <svg class="tray tr-usb"><use href="#w-usb"/></svg>
  <svg class="tray tr-wifi"><use href="#w-wifi"/></svg>
  <svg class="tray tr-vol"><use href="#w-vol"/></svg>
  <i class="tray-kb"></i>
  <span class="tray-zh">中</span>
  <span class="sogou sogou-tray">S</span>
  <div class="clock"><span>20:28</span><span>2017/12/4</span></div>
  <div class="notif"><i class="notif-ic"></i><b class="notif-n">22</b></div>
</div>

<div class="orb"><span>59</span></div>
<div class="imebar">
  <span class="sogou sogou-big">S</span>
  <span class="ime-zh">中</span>
  <span class="ime-punc">°,</span>
  <svg class="ime-ic" viewBox="0 0 16 16"><circle cx="8" cy="8" r="7" fill="none" stroke="#1f7ac8" stroke-width="1.500"/><circle cx="5.500" cy="6" r="1" fill="#1f7ac8"/><circle cx="10.500" cy="6" r="1" fill="#1f7ac8"/><path d="M4.500 10q3.500 3 7 0" fill="none" stroke="#1f7ac8" stroke-width="1.300"/></svg>
  <svg class="ime-ic" viewBox="0 0 16 16"><rect x="5" y="0" width="6" height="11" rx="3" fill="#1f7ac8"/><path d="M3 7c0 6 10 6 10 0M8 12v3M4 15.500h8" fill="none" stroke="#1f7ac8" stroke-width="1.300"/></svg>
  <svg class="ime-ic" viewBox="0 0 16 16"><rect x="0" y="2" width="16" height="12" rx="2" fill="#1f7ac8"/><path d="M2 5h12M2 8h12M4 11h8" stroke="#fff" stroke-dasharray="1.500 1"/></svg>
  <svg class="ime-ic" viewBox="0 0 16 16"><circle cx="6" cy="4" r="3" fill="#9fb0c0"/><path d="M1 13c0-6 10-6 10 0z" fill="#9fb0c0"/><rect x="7" y="9" width="9" height="7" fill="#b8c4d0"/></svg>
  <svg class="ime-ic" viewBox="0 0 16 16"><path d="M5 1l3 2 3-2 5 3-2 4-2-1v8H4V7L2 8 0 4z" fill="#1f7ac8"/></svg>
  <svg class="ime-ic" viewBox="0 0 16 16"><path d="M15 4l-3 3-3-3 3-3c-3-1-6 1-5 5L1 12l3 3 6-6c4 1 6-2 5-5z" fill="#1f7ac8"/></svg>
</div>
<svg class="redcircle" viewBox="0 0 220 246"><ellipse cx="108" cy="123" rx="106" ry="119.500"/></svg>
</body>
</html>
```

FILE: styles.css
```css
* { box-sizing: border-box; }
html, body { margin: 0; padding: 0; }
body {
  position: relative;
  width: 1366px;
  height: 768px;
  overflow: hidden;
  display: flex;
  flex-direction: column;
  background: #f0f0f0;
  color: #000;
  font: 12px/16px "Noto Sans CJK SC", "Noto Sans", sans-serif;
}
.defs { display: none; }
i, b { font-style: normal; }
svg { flex: none; display: block; }
.m { font-family: "Liberation Mono", "Noto Sans CJK SC", monospace; font-size: 12px; letter-spacing: -1.2px; }
.ictext { font: bold 10px "Liberation Serif", serif; fill: #1d4fa8; }
.ictext2 { font: bold 8px "Liberation Sans", sans-serif; fill: #2f5fc0; }
.ictext3 { font: bold 8px "Liberation Sans", sans-serif; fill: #a03030; }

/* title */
.titlebar { height: 23px; flex: none; display: flex; align-items: center; background: #fff; }
.title-logo { width: 16px; height: 16px; margin: 0 5px 0 2px; }
.title-text { font-family: "Noto Sans", "Noto Sans CJK SC", sans-serif; font-size: 12.500px; white-space: nowrap; color: #111; }
.winctl { margin-left: auto; display: flex; align-items: center; padding-right: 15px; }
.win-min { width: 11px; height: 1px; background: #111; }
.win-res { width: 10px; height: 10px; border: 1px solid #111; margin-left: 31px; box-shadow: 2px -2px 0 -1px #fff, 2px -2px 0 0 #111; }
.win-close { width: 16px; margin-left: 35px; font-size: 15px; line-height: 16px; text-align: center; color: #222; }

/* menu */
.menubar { height: 31px; flex: none; display: flex; align-items: center; padding: 0 0 2px 7px; background: linear-gradient(#f7f7f7, #efefef); white-space: nowrap; }
.menubar > span { margin-right: 10.600px; }
.menubar > span.m-tight { margin-right: 0; }
.m-change { margin: 0 5px 0 -3px; width: 16px; height: 18px; }
.m-dd { margin: 0 0 0 8px; }
.m-robot { margin: 0 3px 0 6px; width: 16px; height: 16px; }
.m-notice { width: 192px; margin-left: 10px; padding-left: 25px; height: 29px; line-height: 29px; color: #3a1a00; background: #f5f5f5; font-size: 12px; }
.m-user { width: 16px; height: 16px; margin: 0 4px 0 -1px; }
.menubar > span.m-bean { margin: 0 0 0 11px; }
.m-bell { margin-left: 13px; width: 16px; height: 16px; }
.more { font: bold 12px/12px "DejaVu Sans", sans-serif; width: 9px; align-self: flex-start; margin-top: 5px; color: #111; }
.more-end { margin-left: auto; margin-right: 5px; }

/* toolbars */
.toolbar { height: 30px; flex: none; display: flex; align-items: center; background: linear-gradient(#fbfbfb, #ebebeb); white-space: nowrap; }
.toolbar2 { height: 26px; flex: none; display: flex; align-items: center; padding-left: 4px; background: linear-gradient(#fbfbfb, #eeeeee); white-space: nowrap; }
.ic { width: 15px; height: 15px; flex: none; }
.ic16 { width: 16px; height: 16px; flex: none; }
.ic14 { width: 14px; height: 14px; flex: none; }
.ic13 { width: 13px; height: 13px; flex: none; }
.ic10 { width: 10px; height: 12px; flex: none; }
.tool { display: flex; align-items: center; gap: 4px; flex: none; }
.t5 { gap: 5px; } .t6 { gap: 6px; } .t7 { gap: 7px; } .t8 { gap: 8px; }
.off { color: #8c8c8c; }
.sigma { width: 13px; font: bold 14px/16px "Liberation Sans", sans-serif; text-align: center; }
.dd { width: 0; height: 0; flex: none; border: 3px solid transparent; border-top: 3px solid #333; border-bottom: 0; box-sizing: content-box; }
.dd-grey { border-top-color: #777; }
.dd-k { border-top-color: #000; }
.sep { width: 1px; height: 20px; flex: none; background: #b8b8b8; }
.g3 { margin-left: 3px; } .g4 { margin-left: 4px; } .g5 { margin-left: 5px; } .g6 { margin-left: 6px; }
.g7 { margin-left: 7px; } .g8 { margin-left: 8px; } .g9 { margin-left: 9px; } .g10 { margin-left: 10px; }
.g20 { margin-left: 19px; } .g39 { margin-left: 39px; }
.combo { display: flex; align-items: center; flex: none; width: 62px; height: 23px; border: 1px solid #6e6e6e; color: #8c8c8c; background: #f4f4f4; padding: 0 3px; }
.combo-swatch { width: 14px; height: 11px; background: #e4e4e4; border: 1px solid #d0d0d0; margin-right: 4px; }
.combo .dd { margin-left: auto; }
.combo-floor { display: flex; align-items: center; width: 62px; height: 24px; flex: none; background: #fff; padding: 0 4px 0 2px; }
.combo-floor .dd { margin-left: auto; }

/* workspace */
.workspace { height: 622px; flex: none; display: flex; }
.nav { width: 206px; flex: none; display: flex; flex-direction: column; padding: 0 5px 0 0; }
.nav-head { height: 15px; flex: none; display: flex; align-items: center; background: #0a4fd8; color: #fff; letter-spacing: 1px; }
.nav-head span { flex: 1; line-height: 15px; }
.pin { width: 10px; height: 12px; margin-right: 7px; }
.nav-x { width: 17px; height: 12px; border: 1px solid #111; background: #0a4fd8; font-size: 9px; line-height: 10px; text-align: center; letter-spacing: 0; margin-right: 1px; }
.nav-btn { height: 21px; flex: none; margin: 1px 0 0 1px; width: 199px; padding: 0; border: 1px solid #a9a9a9; background: #f0f0f0; font: inherit; color: #111; }
.nav-head + .nav-btn { margin-top: 2px; }
.nav-btn-low { margin-top: 3px; }
.nav-tools { height: 27px; flex: none; margin: 1px 1px 0 1px; background: linear-gradient(#fafafa, #ededed); display: flex; align-items: center; gap: 7px; padding-left: 6px; border: 1px solid #dcdcdc; }
.pm { width: 18px; height: 16px; }
.treebox { display: flex; background: #fff; border: 2px solid #a0a0a0; border-top-width: 1px; overflow: hidden; }
.nav-tree { width: 197px; height: 486px; flex: none; margin-left: 2px; }
.tree-list { flex: 1; overflow: hidden; position: relative; padding-top: 1px; }
.sb { width: 16px; flex: none; display: flex; flex-direction: column; background: #f0f0f0; }
.sb-track { flex: 1; }
.sb-up, .sb-dn { height: 16px; flex: none; position: relative; display: block; }
.sb-up::after, .sb-dn::after { content: ""; position: absolute; left: 4px; width: 7px; height: 7px; border: solid #666; border-width: 2px 0 0 2px; transform: rotate(45deg); top: 6px; }
.sb-dn::after { transform: rotate(225deg); top: 2px; }
.thumb { background: #cdcdcd; }
.thumb-nav { margin-top: 163px; height: 253px; }
.thumb-comp { margin-top: 326px; height: 202px; }

.chev { width: 10px; height: 16px; flex: none; position: relative; display: block; background: #fff; }
.chev::after { content: ""; position: absolute; left: 2px; top: 3px; width: 6px; height: 6px; border: solid #555; border-width: 0 2px 2px 0; transform: rotate(45deg); }
.chev.closed::after { border-color: #b4b4b4; left: 0; top: 5px; transform: rotate(-45deg); }

/* module tree */
.nf { height: 16px; display: flex; align-items: center; padding-left: 5px; position: relative; }
.nf::after { content: ""; position: absolute; left: 16px; top: 8px; width: 5px; border-top: 1px dotted #777; }
.fol { width: 17px; height: 14px; margin: 0 4px 0 7px; }
.grp { position: relative; }
.grp::after { content: ""; position: absolute; left: 30px; top: 0; bottom: 8px; border-left: 1px dotted #777; }
.grp.trunk::before { content: ""; position: absolute; left: 11px; top: 0; bottom: 4px; border-left: 1px dotted #777; }
.nc { height: 16px; position: relative; padding-left: 39px; }
.nc::before { content: ""; position: absolute; left: 31px; top: 8px; width: 9px; border-top: 1px dotted #777; }
.ni { display: flex; align-items: center; gap: 5px; width: 92px; height: 16px; padding-left: 2px; white-space: nowrap; }
.ni-sel { background: #d9d9d9; }
.nic { width: 16px; height: 16px; }

/* editor */
.editor { flex: 1; min-width: 0; display: flex; flex-direction: column; }
.panes { flex: 1; display: flex; }
.comp { width: 182px; flex: none; padding-top: 7px; display: flex; flex-direction: column; }
.search { height: 24px; flex: none; display: flex; align-items: center; }
.search-input { width: 157px; height: 24px; margin-left: 1px; background: #fff; border: 1px solid #7f7f7f; color: #888; font-size: 12px; line-height: 22px; padding-left: 2px; }
.search-btn { width: 15px; height: 15px; margin-left: 5px; }
.comp-tree { height: 562px; width: 182px; flex: none; }
.dj-list { padding-top: 2px; }
.l0, .l1 { height: 16px; position: relative; white-space: nowrap; }
.l0 { display: flex; align-items: center; padding-left: 24px; }
.l0::after { content: ""; position: absolute; left: 35px; top: 8px; width: 7px; border-top: 1px dotted #777; }
.plain::before, .l1::before { content: ""; position: absolute; left: 29px; top: 0; height: 16px; border-left: 1px dotted #777; }
.l1.last::before { display: none; }
.slot { width: 10px; height: 16px; flex: none; }
.l0 .gear { margin: 0 8px 0 8px; }
.gear { width: 12px; height: 12px; }
.l1::after { content: ""; position: absolute; left: 49px; top: 0; width: 10px; height: 9px; border: dotted #777; border-width: 0 0 1px 1px; }
.leaf { display: flex; align-items: center; margin-left: 58px; width: 93px; height: 16px; padding-left: 5px; position: relative; z-index: 1; }
.leaf .gear { margin-right: 7px; }
.bot { width: 23px; letter-spacing: .8px; white-space: nowrap; }
.leaf-sel { background: #3064c0; color: #fff; }

/* props */
.props { flex: 1; min-width: 0; margin-left: 8px; display: flex; flex-direction: column; }
.tabstrip { height: 22px; flex: none; padding-top: 2px; background: #fff; border-bottom: 1px solid #c8c8c8; }
.tab { width: 62px; height: 20px; background: #fff; border-right: 1px solid #c8c8c8; border-top: 1px solid #e4e4e4; padding-left: 5px; line-height: 18px; }
.propbox { height: 569px; margin: 2px 4px 0 1px; background: #fff; border: 1px solid #a8a8a8; padding: 2px 0 0 0; }
.grid { border-collapse: collapse; table-layout: fixed; width: 369px; }
.c-n { width: 21px; } .c-name { width: 190px; } .c-val { width: 127px; } .c-add { width: 31px; }
.grid th, .grid td { border: 1px solid #c4c4c4; padding: 0; height: 19px; font-weight: 400; line-height: 16px; white-space: nowrap; overflow: hidden; }
.grid th { height: 23px; background: linear-gradient(#fbfbfb, #ececec); }
.grid .hval { background: linear-gradient(#fbdda2, #f3be60); color: #6a0a70; }
.grid .hadd { text-align: left; padding-left: 1px; }
.grid td.rn, .grid th.rn { background: #f0f0f0; text-align: center; font-family: "Liberation Sans", sans-serif; font-size: 11px; }
.lb { padding-left: 19px !important; }
.lb-exp { padding-left: 2px !important; }
.val { padding-left: 2px !important; }
.ln { font-family: "Liberation Sans", sans-serif; font-size: 11px; }
.blue { color: #0000e0; }
.dis td { color: #8a8a8a; }
.dis .rn { color: #000; }
.sel .lb { background: #0078d7; color: #fff; }
.sel .rn { background: #fbd48e !important; color: #5a0a70; }
.sel .val { background: #d4e7f8; }
.ck { text-align: center; }
.ck i { display: inline-block; width: 13px; height: 13px; border: 1px solid #333; background: #fff; vertical-align: middle; }
.expand { display: inline-block; width: 12px; height: 12px; border: 1px solid #888; font: 11px/10px "Liberation Mono", monospace; text-align: center; margin-right: 5px; color: #000; vertical-align: -1px; background: #fff; letter-spacing: 0; }
.rebar { display: inline-block; width: 11px; margin: 0 1px 0 2px; font: 10px/12px "Noto Sans CJK SC", sans-serif; letter-spacing: 0; text-align: center; }

/* status */
.status { height: 22px; flex: none; display: flex; gap: 2px; padding-top: 2px; align-items: stretch; overflow: hidden; white-space: nowrap; }
.st { height: 19px; background: #f2f2f2; border: 1px solid #e2e2e2; line-height: 18px; padding-left: 1px; flex: none; }
.st-a { width: 148px; } .st-b { width: 78px; } .st-c { width: 98px; } .st-d { width: 48px; padding-left: 2px; }
.st-e { width: 913px; padding-left: 1px; letter-spacing: .06px; } .st-f { width: 71px; }

/* taskbar */
.taskbar { height: 40px; flex: none; display: flex; align-items: center; background: #03090c; color: #fff; position: relative; }
.start { width: 48px; height: 40px; flex: none; background: #000; display: flex; align-items: center; justify-content: center; }
.wlogo { display: grid; grid-template-columns: 7px 8px; grid-auto-rows: 7px; gap: 1px; transform: perspective(60px) rotateY(-18deg); }
.wlogo b { background: #fff; display: block; }
.cortana { width: 345px; height: 40px; flex: none; background: #333; display: flex; align-items: center; padding-left: 10px; color: #9a9a9a; font-size: 14px; }
.ring { width: 20px; height: 20px; border: 3px solid #e6e6e6; border-radius: 50%; margin-right: 6px; flex: none; }
.mic { width: 12px; height: 20px; margin-left: auto; margin-right: 15px; }
.task { width: 49px; height: 40px; flex: none; display: flex; align-items: center; justify-content: center; position: relative; }
.t50 { width: 50px; }
.first-pin { margin-left: 5px; }
.run::after { content: ""; position: absolute; left: 1px; right: 1px; bottom: 0; height: 3px; background: #76b9ed; }
.first-pin::after { display: none; }
.active { background: #3a4449; }
.tk { width: 24px; height: 24px; }
.taskview { width: 11px; height: 16px; border: 1.500px solid #fff; box-shadow: -4px 0 0 -3px #fff, 4px 0 0 -3px #fff; }
.cpu { width: 50px; margin-left: 50px; display: flex; flex-direction: column; align-items: center; font-size: 12px; line-height: 19px; color: #eee; white-space: nowrap; }
.tray-up { width: 9px; height: 9px; border: solid #eee; border-width: 1.500px 0 0 1.500px; transform: rotate(45deg); margin: 6px 0 0 20px; flex: none; }
.tray { flex: none; }
.tr-usb { width: 18px; height: 14px; margin-left: 12px; }
.tr-wifi { width: 14px; height: 14px; margin-left: 10px; }
.tr-vol { width: 16px; height: 14px; margin-left: 8px; }
.tray-kb { width: 23px; height: 14px; margin-left: 6px; border: 1px solid #eee; background: repeating-linear-gradient(90deg, #eee 0 1px, transparent 1px 3px) 3px 3px / 16px 2px no-repeat, repeating-linear-gradient(90deg, #eee 0 1px, transparent 1px 3px) 3px 7px / 16px 2px no-repeat; }
.tray-zh { margin-left: 10px; font-size: 14px; font-weight: 700; color: #fff; width: 14px; }
.sogou { display: flex; align-items: center; justify-content: center; background: #f04a16; color: #fff; font: 900 14px/1 "Liberation Sans", sans-serif; border-radius: 3px; flex: none; }
.sogou-tray { width: 17px; height: 17px; margin-left: 14px; transform: rotate(-6deg); }
.clock { width: 60px; margin-left: 15px; display: flex; flex-direction: column; align-items: center; font-size: 12px; line-height: 20px; color: #eee; font-family: "Noto Sans", sans-serif; white-space: nowrap; }
.notif { position: relative; width: 26px; height: 20px; margin-left: 17px; }
.notif-ic { position: absolute; left: 0; top: 0; width: 15px; height: 14px; background: repeating-linear-gradient(#fff 0 3px, #111 3px 4px); }
.notif-n { position: absolute; left: 4px; top: 7px; width: 22px; height: 14px; border-radius: 7px; background: #444; border: 1px solid #888; color: #fff; font: bold 11px/12px "Liberation Sans", sans-serif; text-align: center; }

/* overlays */
.orb { position: absolute; left: 915px; top: -34px; width: 52px; height: 52px; border-radius: 50%; background: linear-gradient(#2db04a, #54c864); border: 2px solid #b8c0b8; box-shadow: 0 1px 4px rgba(0,0,0,.35); color: #fff; font: bold 13px/14px "Liberation Sans", sans-serif; display: flex; align-items: flex-end; justify-content: center; padding-bottom: 1px; }
.imebar { position: absolute; left: 1002px; top: 3px; width: 205px; height: 24px; display: flex; align-items: center; color: #1f7ac8; }
.imebar::before { content: ""; position: absolute; left: 20px; right: 0; top: 0; height: 23px; background: #f5f8fc; border: 1px solid #c8d6e6; }
.imebar > * { position: relative; }
.sogou-big { width: 27px; height: 22px; font-size: 24px; border-radius: 5px; transform: rotate(-8deg) skewX(-3deg); }
.ime-zh { font-size: 15px; font-weight: 700; margin-left: 5px; width: 16px; }
.ime-punc { font: bold 13px/16px "Liberation Sans", sans-serif; margin-left: 8px; width: 12px; }
.ime-ic { width: 16px; height: 16px; margin-left: 7px; }
.redcircle { position: absolute; left: 564px; top: 122px; width: 220px; height: 246px; pointer-events: none; }
.redcircle ellipse { fill: none; stroke: #f00; stroke-width: 3; }
```
